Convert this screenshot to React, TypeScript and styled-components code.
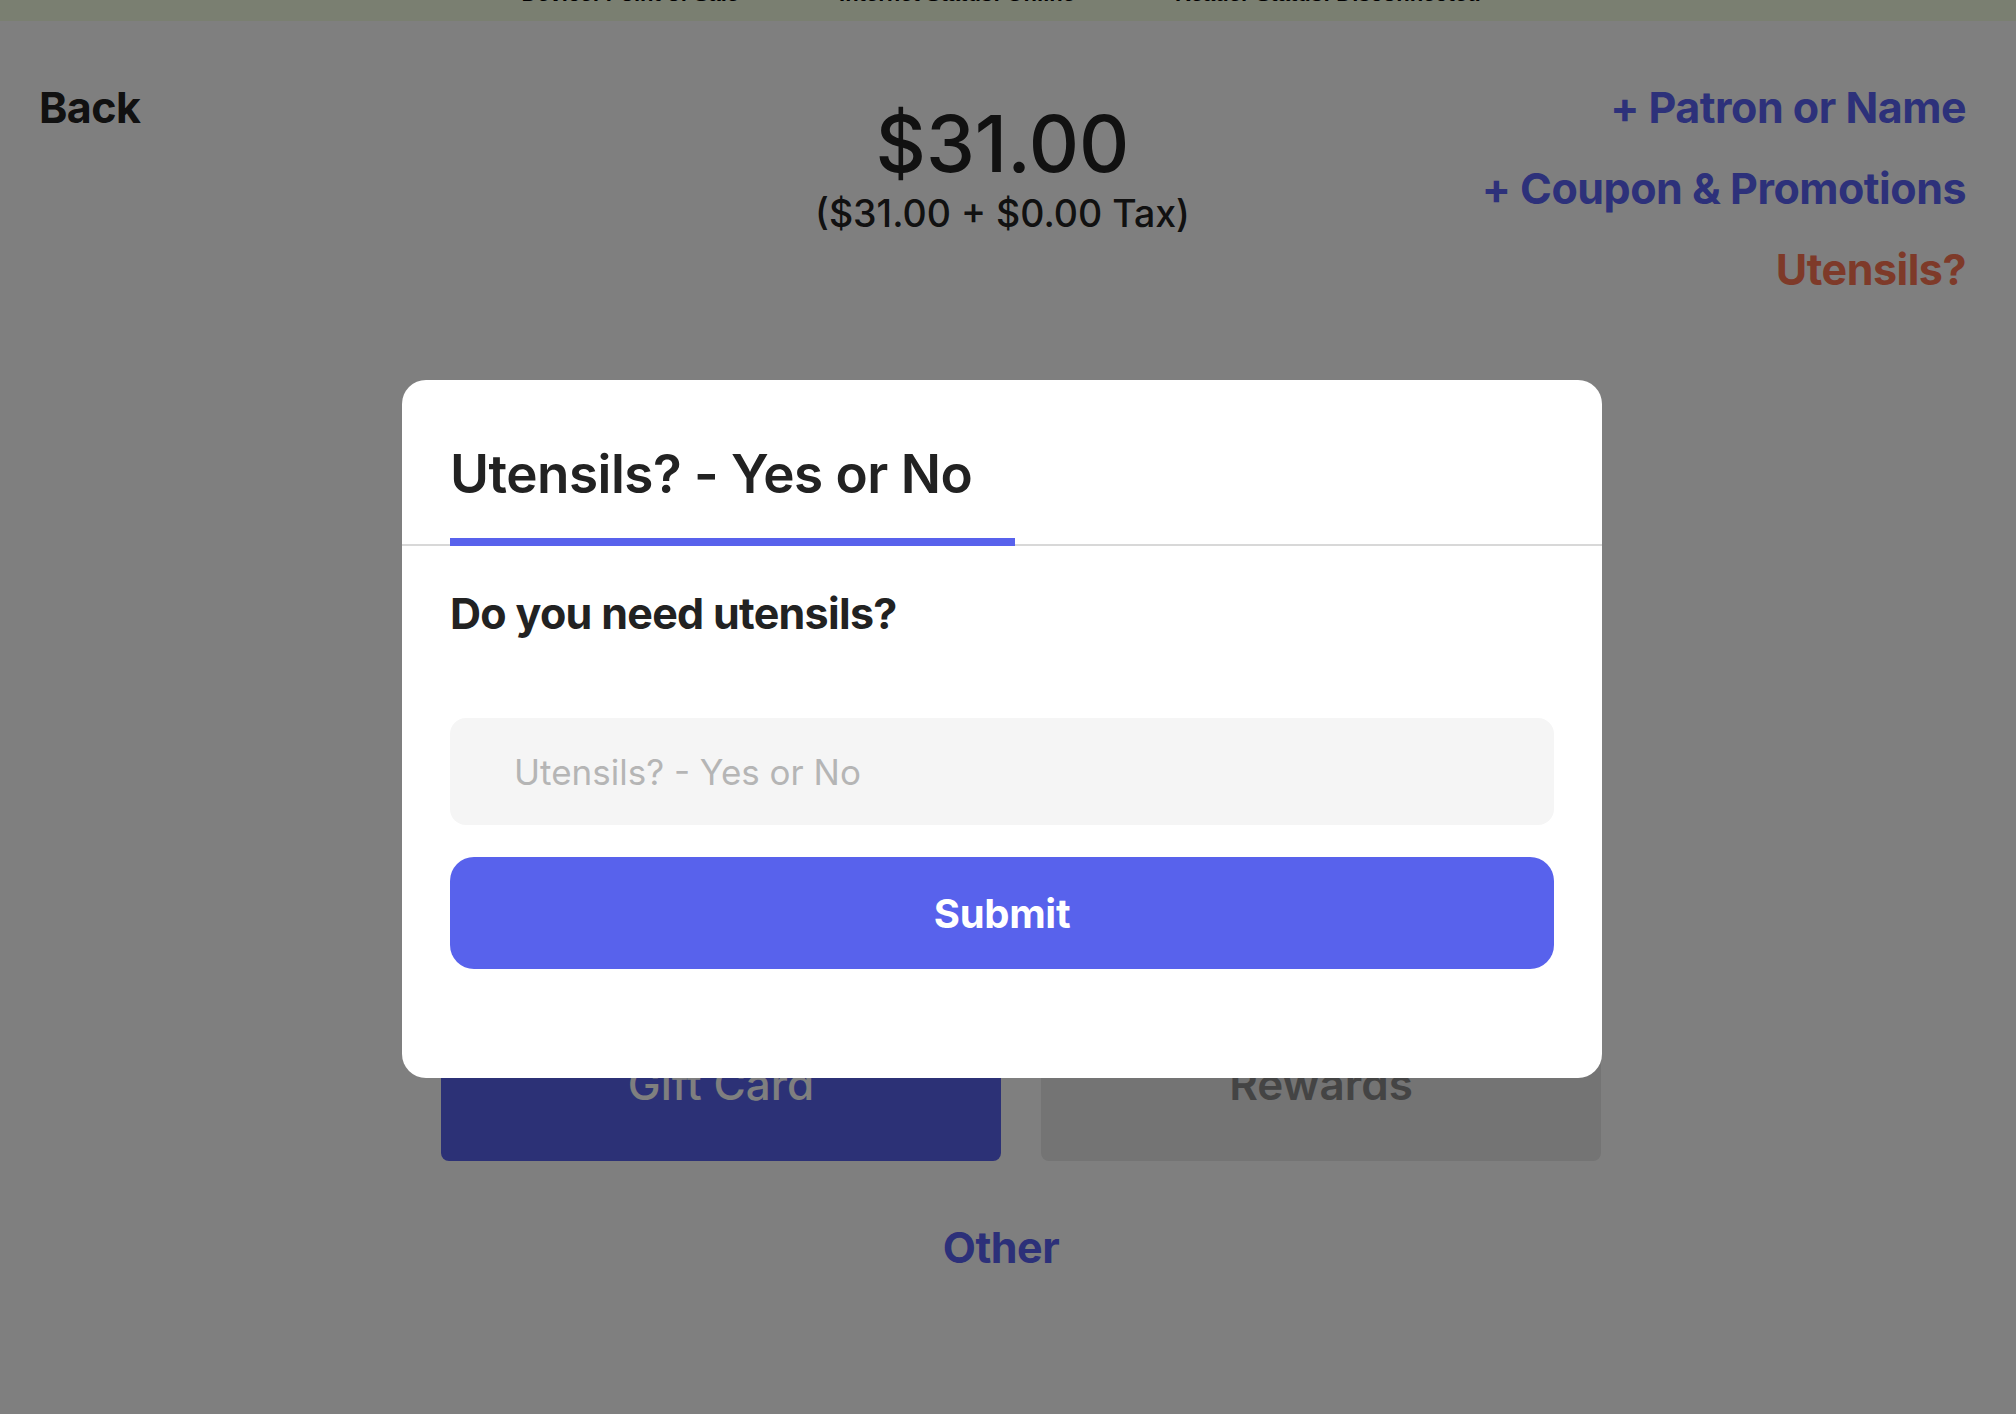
import React from "react";
import styled, { createGlobalStyle } from "styled-components";

const PRIMARY = "#5862ec";

const GlobalStyle = createGlobalStyle`
  html, body {
    margin: 0;
    padding: 0;
    background: #ffffff;
    font-family: Inter, "Noto Sans", "Liberation Sans", sans-serif;
  }
  * { box-sizing: border-box; }
`;

const Page = styled.div`
  position: relative;
  min-height: 1414px;
  background: #ffffff;
  color: #222222;
  display: flex;
  flex-direction: column;
`;

const StatusBar = styled.div`
  height: 21px;
  background: #f4ffe2;
  overflow: hidden;
  display: flex;
  justify-content: center;
  gap: 100px;
  padding-right: 14px;
`;

const StatusItem = styled.span`
  font-family: "Liberation Sans", Arial, sans-serif;
  font-weight: 700;
  font-size: 22px;
  line-height: 22px;
  margin-top: -17px;
  color: #000;
  white-space: nowrap;
`;

const Header = styled.header`
  display: grid;
  grid-template-columns: 1fr auto 1fr;
  align-items: start;
  padding: 59px 50px 0 39px;
`;

const BackLink = styled.a`
  justify-self: start;
  font-size: 43px;
  line-height: 54px;
  font-weight: 700;
  color: #222;
  letter-spacing: -0.6px;
  cursor: pointer;
`;

const Totals = styled.div`
  display: flex;
  flex-direction: column;
  align-items: center;
  padding-top: 25px;
  gap: 8px;
`;

const Amount = styled.div`
  font-size: 78px;
  line-height: 78px;
  font-weight: 500;
  color: #222;
`;

const Breakdown = styled.div`
  font-size: 37.5px;
  line-height: 46px;
  font-weight: 500;
  color: #222;
`;

const Actions = styled.div`
  justify-self: end;
  display: flex;
  flex-direction: column;
  align-items: flex-end;
  gap: 27px;
`;

const ActionLink = styled.a<{ $tone?: "primary" | "warn" }>`
  font-size: 43px;
  line-height: 54px;
  font-weight: 700;
  letter-spacing: -0.5px;
  color: ${(p) => (p.$tone === "warn" ? "#fd7452" : "#5a63f4")};
  cursor: pointer;
  white-space: nowrap;
`;

const Body = styled.main`
  display: flex;
  flex-direction: column;
  align-items: center;
  padding-right: 14px;
  margin-top: 517px;
`;

const PaymentGrid = styled.div`
  width: 1200px;
  padding-left: 40px;
  display: grid;
  grid-template-columns: 1fr 1fr;
  column-gap: 40px;
  row-gap: 40px;
`;

const PayButton = styled.button<{ $variant: "primary" | "muted" }>`
  height: 154px;
  border: none;
  border-radius: 8px;
  font-family: inherit;
  font-size: 44px;
  font-weight: ${(p) => (p.$variant === "primary" ? 500 : 600)};
  background: ${(p) => (p.$variant === "primary" ? PRIMARY : "#e8e8e8")};
  color: ${(p) => (p.$variant === "primary" ? "#ffffff" : "#888888")};
`;

const OtherLink = styled.a`
  margin-top: 59px;
  font-size: 43px;
  line-height: 54px;
  font-weight: 700;
  color: #5860f2;
  letter-spacing: -0.5px;
`;

const Overlay = styled.div`
  position: fixed;
  inset: 0;
  background: rgba(0, 0, 0, 0.5);
  display: flex;
  justify-content: center;
  align-items: flex-start;
  padding-top: 380px;
  padding-right: 12px;
`;

const Modal = styled.div`
  width: 1200px;
  background: #ffffff;
  border-radius: 24px;
  padding: 62px 0 109px;
  display: flex;
  flex-direction: column;
`;

const TabBar = styled.div`
  display: flex;
  padding: 0 48px;
  border-bottom: 2px solid #d8d8d8;
`;

const Tab = styled.div`
  width: 565px;
  padding-bottom: 32px;
  border-bottom: 8px solid ${PRIMARY};
  margin-bottom: -2px;
`;

const ModalTitle = styled.h2`
  margin: 0;
  font-size: 53px;
  line-height: 64px;
  font-weight: 600;
  letter-spacing: -0.5px;
  color: #222;
`;

const ModalContent = styled.div`
  padding: 40px 48px 0;
  display: flex;
  flex-direction: column;
`;

const Question = styled.p`
  margin: 0;
  font-size: 43px;
  line-height: 54px;
  font-weight: 700;
  letter-spacing: -0.7px;
  color: #222;
`;

const AnswerInput = styled.input`
  margin-top: 78px;
  height: 107px;
  width: 100%;
  border: none;
  outline: none;
  border-radius: 16px;
  background: #f5f5f5;
  padding: 0 64px;
  font-family: inherit;
  font-size: 35px;
  color: #222;
  &::placeholder {
    color: #b5b5b5;
  }
`;

const SubmitButton = styled.button`
  margin-top: 32px;
  height: 112px;
  width: 100%;
  border: none;
  border-radius: 24px;
  background: ${PRIMARY};
  color: #ffffff;
  font-family: inherit;
  font-size: 40px;
  font-weight: 700;
  letter-spacing: -0.3px;
  cursor: pointer;
`;

export default function App() {
  return (
    <>
      <GlobalStyle />
      <Page>
        <StatusBar>
          <StatusItem>Device: Point of Sale</StatusItem>
          <StatusItem>Internet Status: Online</StatusItem>
          <StatusItem>Reader Status: Disconnected</StatusItem>
        </StatusBar>
        <Header>
          <BackLink>Back</BackLink>
          <Totals>
            <Amount>$31.00</Amount>
            <Breakdown>($31.00 + $0.00 Tax)</Breakdown>
          </Totals>
          <Actions>
            <ActionLink>+ Patron or Name</ActionLink>
            <ActionLink>+ Coupon &amp; Promotions</ActionLink>
            <ActionLink $tone="warn">Utensils?</ActionLink>
          </Actions>
        </Header>
        <Body>
          <PaymentGrid>
            <PayButton $variant="primary">Card</PayButton>
            <PayButton $variant="muted">Cash</PayButton>
            <PayButton $variant="primary">Gift Card</PayButton>
            <PayButton $variant="muted">Rewards</PayButton>
          </PaymentGrid>
          <OtherLink>Other</OtherLink>
        </Body>
        <Overlay>
          <Modal>
            <TabBar>
              <Tab>
                <ModalTitle>Utensils? - Yes or No</ModalTitle>
              </Tab>
            </TabBar>
            <ModalContent>
              <Question>Do you need utensils?</Question>
              <AnswerInput placeholder="Utensils? - Yes or No" />
              <SubmitButton>Submit</SubmitButton>
            </ModalContent>
          </Modal>
        </Overlay>
      </Page>
    </>
  );
}
